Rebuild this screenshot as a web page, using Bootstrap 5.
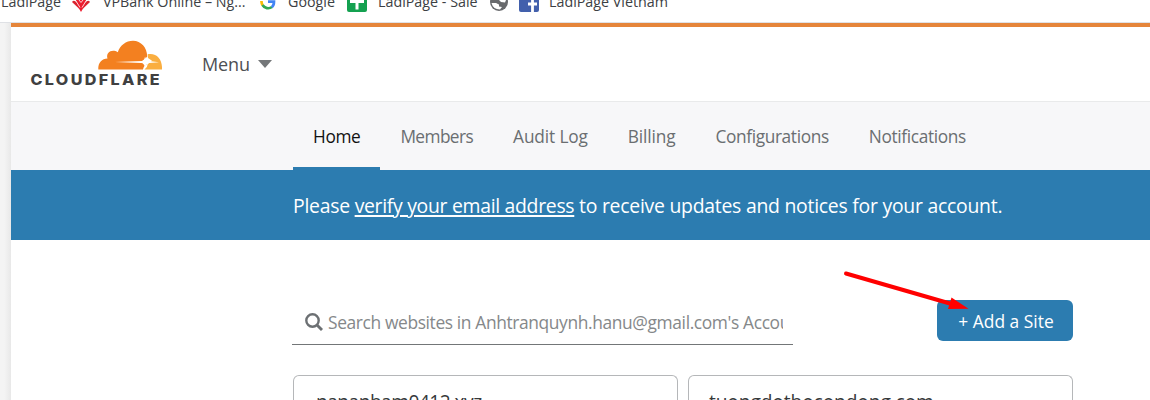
<!DOCTYPE html>
<html lang="en">
<head>
<meta charset="utf-8">
<meta name="viewport" content="width=device-width, initial-scale=1">
<title>Home | Cloudflare</title>
<link href="https://cdn.jsdelivr.net/npm/bootstrap@5.3.0/dist/css/bootstrap.min.css" rel="stylesheet">
<style>
body{font-family:"Open Sans","Noto Sans",sans-serif;font-size:18px;line-height:24px;color:#36393a;background:#f3f3f3;height:400px;overflow:hidden;position:relative}
.bookmarks{height:23px;background:#fff;border-bottom:1px solid #dfe1e5;font-size:14.3px;line-height:20px;color:#3c4043;overflow:hidden;white-space:nowrap}
.bookmark{height:12px;flex:none}
.bookmark svg{display:block;flex:none}
.bookmark span{margin-top:-8px;white-space:nowrap}
.bm-first{width:70px;padding-left:1px}
.bm-bank{width:190px;gap:12px;padding-left:1px}
.bm-google{width:86px;gap:12px}
.bm-sheet{width:143px;gap:11px;padding-left:1px}
.bm-globe{width:30px}
.bm-fb{gap:10px}
.page-edge{width:11px;background:linear-gradient(90deg,#f4f4f4 40%,#e8e8e8)}
.app{min-width:0;background:#fff;height:377px}
.accent{height:4px;background:#e5853a}
.masthead{height:75px;border-bottom:1px solid #e9eaeb;padding-left:19px}
.logo{margin-bottom:4px}
.menu-btn{margin-left:40px;font-size:18px;letter-spacing:-.1px;color:#4d4f53;line-height:24px}
.subnav{height:68px;background:#f7f7f9;padding-left:282px}
.subnav .nav-link{padding:22px 20px 21px;height:68px;color:#6a6e71;border-bottom:3px solid transparent;white-space:nowrap;font-size:17.3px;line-height:25px;letter-spacing:-.36px}
.subnav .nav-link.active{color:#111;border-color:#2c7cb0}
.subnav .tight{letter-spacing:-.59px}
.subnav .loose{letter-spacing:-.14px}
.notice{height:70px;background:#2c7cb0;color:#fff;padding-left:282px;font-size:19.4px;letter-spacing:-.25px;white-space:nowrap;padding-top:1px}
.notice a{color:#fff;text-decoration-thickness:1.5px;text-underline-offset:2px;letter-spacing:-.3px}
.work{padding-left:281px;padding-top:60px;width:1062px}
.search{width:501px;height:45px;border-bottom:1px solid #737678;padding:0 10px 0 13px;color:#85888a}
.search .ph{width:455px;overflow:hidden;white-space:nowrap;margin-left:5px;font-size:17.4px;letter-spacing:-.38px}
.btn-add{width:136px;height:41px;background:#2c7cb0;color:#fff;border-radius:6px;padding:2px 0 0 2px;font-size:17.4px;white-space:nowrap}
.sites{gap:10px;margin:30px 0 0 1px}
.site{width:385px;flex:none;height:25px;border:1px solid #b5b7b9;border-bottom:0;border-radius:6px 6px 0 0;padding:12px 0 0 22px;font-size:19.2px;line-height:28px;color:#36393a;letter-spacing:-.55px}
.site+.site{letter-spacing:-.12px;padding-left:20px}
.pointer{position:absolute;left:840px;top:265px}
</style>
</head>
<body>
<div class="bookmarks d-flex align-items-start">
  <div class="bookmark bm-first d-flex"><span>LadiPage</span></div>
  <div class="bookmark bm-bank d-flex">
    <svg width="20" height="12" viewBox="0 0 20 12"><path d="M1 2Q3-1 6 3L9 9.500Z" fill="#d9232e"/><path d="M19 2Q17-1 14 3L11 9.500Z" fill="#d9232e"/><path d="M5 0h10L14 5l-4 7-4-7Z" fill="#ed1c2e"/><path d="M8 0l2 2.500L12 0M5 1l4 6.500M15 1l-4 6.500" stroke="#fff" stroke-width=".8" fill="none"/></svg>
    <span>VPBank Online – Ng...</span>
  </div>
  <div class="bookmark bm-google d-flex">
    <svg width="16" height="12" viewBox="0 0 16 12"><path d="M1.500 1A6.600 6.600 0 0 0 2.600 5.200" stroke="#fbbc05" stroke-width="2.700" fill="none"/><path d="M2.500 5A6.600 6.600 0 0 0 12 7" stroke="#34a853" stroke-width="2.700" fill="none"/><path d="M8 1.600h6Q14 5.500 11.800 7.200" stroke="#4285f4" stroke-width="2.700" fill="none"/></svg>
    <span>Google</span>
  </div>
  <div class="bookmark bm-sheet d-flex">
    <svg width="20" height="12" viewBox="0 0 20 12"><path d="M0 0h20v10q0 2-2 2H2q-2 0-2-2Z" fill="#14a150"/><path d="M3 1.500h14M10 0v9.500" stroke="#fff" stroke-width="3"/></svg>
    <span>LadiPage - Sale</span>
  </div>
  <div class="bookmark bm-globe d-flex">
    <svg width="20" height="12" viewBox="0 0 20 12"><circle cx="10" cy="2" r="9" fill="#686a6d"/><path d="M2.500 3h4.500l3 1.500v2l3 .5-2 2.500q-7 0-8.500-6.500M10 0l2 2 4 .5 1-2.500Z" fill="#fff"/></svg>
  </div>
  <div class="bookmark bm-fb d-flex">
    <svg width="20" height="12" viewBox="0 0 20 12"><path d="M0 0h20v10q0 2-2 2H2q-2 0-2-2Z" fill="#4260ac"/><path d="M13.500 12V0M9 4h9" stroke="#fff" stroke-width="2.800"/></svg>
    <span>LadiPage Vietnam</span>
  </div>
</div>
<div class="d-flex">
  <div class="page-edge"></div>
  <div class="app flex-grow-1">
    <div class="accent"></div>
    <header class="masthead d-flex align-items-center">
      <svg class="logo" width="132" height="48" viewBox="0 0 132 48">
        <path d="M68.300 31.500C68 24.500 72 20.500 77.500 20.500C75.500 14.500 82 10.500 87.800 14.200C90 7.200 96 2.700 103 2.700C111 2.700 117.200 9.500 117.200 18.600Q115.300 21.500 112.400 22.800L117 26Q113.600 27.500 113 31.500Z" fill="#f38020"/>
        <path d="M117.600 16.200C127 14.500 132.500 21.500 132 31.500H114.500Q117.500 29.500 117.800 26L122 22.800 118 20Z" fill="#faae40"/>
        <path d="M85 24.100L112 22.900Q114.600 22.500 115 18.600Q116 22.700 119.300 23.100L129 24.200 119.300 25.100Q116 25.500 115 29.500Q114 25.200 111.300 25.100Z" fill="#fff"/>
        <text x="0.500" y="46.600" font-family="Inter,sans-serif" font-weight="800" font-size="15" fill="#404041" textLength="131.500" lengthAdjust="spacingAndGlyphs" letter-spacing="2.200">CLOUDFLARE</text>
      </svg>
      <div class="menu-btn d-flex align-items-center"><span>Menu</span><svg class="ms-2" width="14" height="8" viewBox="0 0 14 8"><path d="M0 0h14L7 8Z" fill="#747779"/></svg></div>
    </header>
    <nav class="subnav nav flex-nowrap">
      <a class="nav-link active" href="#">Home</a>
      <a class="nav-link tight" href="#">Members</a>
      <a class="nav-link loose" href="#">Audit Log</a>
      <a class="nav-link loose" href="#">Billing</a>
      <a class="nav-link" href="#">Configurations</a>
      <a class="nav-link" href="#">Notifications</a>
    </nav>
    <div class="notice d-flex align-items-center"><div>Please <a href="#">verify your email address</a> to receive updates and notices for your account.</div></div>
    <main class="work">
      <div class="d-flex justify-content-between align-items-start">
        <div class="search d-flex align-items-center">
          <svg width="18" height="18" viewBox="0 0 18 18" fill="none" stroke="#6c7073" stroke-width="2.400"><circle cx="7.500" cy="7.500" r="6.200"/><path d="M12 12l5 5" stroke-width="2.900"/></svg>
          <div class="ph">Search websites in Anhtranquynh.hanu@gmail.com's Account</div>
        </div>
        <button class="btn btn-add" type="button">+ Add a Site</button>
      </div>
      <div class="sites d-flex">
        <div class="site">nananham0412.xyz</div>
        <div class="site">tuongdothocondong.com</div>
      </div>
    </main>
  </div>
</div>
<svg class="pointer" width="132" height="50" viewBox="0 0 132 50"><path d="M6 8.500L110 38.500" stroke="#f00" stroke-width="4" stroke-linecap="round"/><path d="M111.500 32.500L128.500 43.800 108 44Z" fill="#f00"/></svg>
</body>
</html>
